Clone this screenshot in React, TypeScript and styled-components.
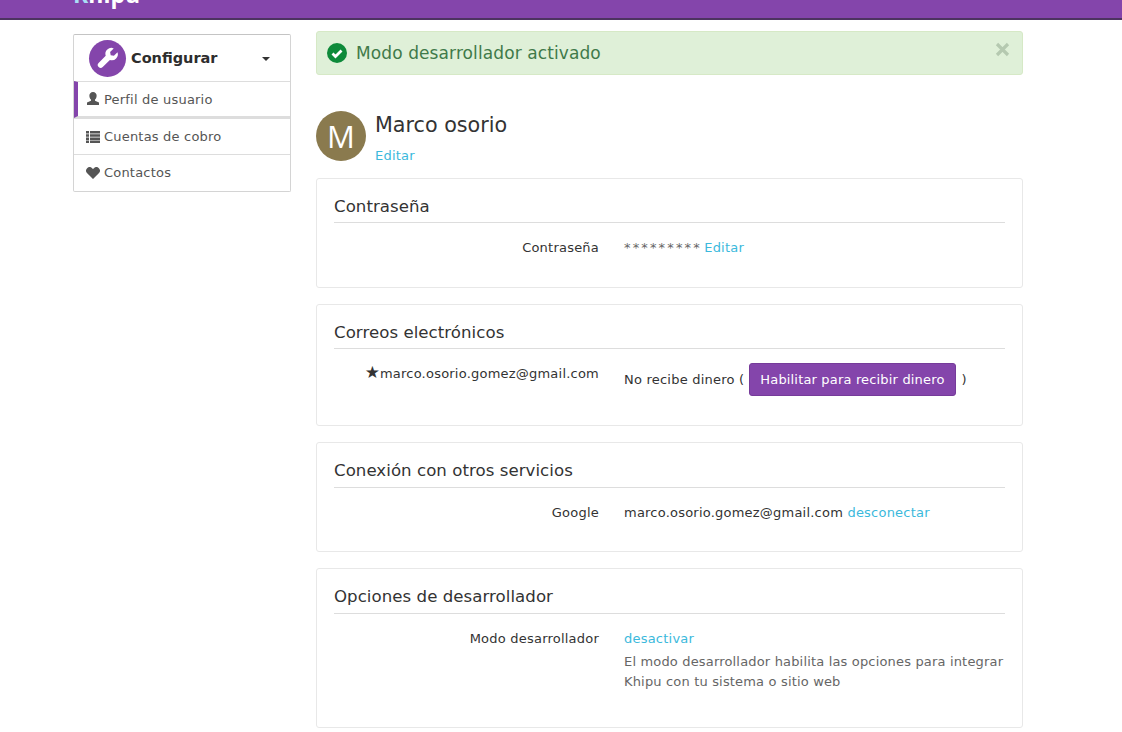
import styled, { createGlobalStyle } from "styled-components";

const GlobalStyle = createGlobalStyle`
  html, body {
    margin: 0;
    padding: 0;
    background: #fff;
    color: #333;
    font-family: "DejaVu Sans", Verdana, sans-serif;
    font-size: 13px;
    letter-spacing: 0.22px;
  }
  * { box-sizing: border-box; }
`;

const Page = styled.div`
  height: 732px;
  overflow: hidden;
`;

const TopBar = styled.div`
  height: 20px;
  background: #8445ab;
  border-bottom: 2px solid #4d3360;
  padding-left: 73px;
  overflow: hidden;
`;

const Logo = styled.div`
  margin-top: -19px;
  color: #fff;
  font: bold 23px "Open Sans", sans-serif;
  line-height: 26px;
  letter-spacing: 0;
`;

const LogoMark = styled.span`
  color: #a9def5;
`;

const Layout = styled.div`
  display: grid;
  grid-template-columns: 218px 707px;
  column-gap: 25px;
  padding: 11px 0 0 73px;
`;

const Menu = styled.div`
  margin-top: 3px;
  border: 1px solid #d4d4d4;
  border-top-color: #c4c4c4;
  border-radius: 2px;
  height: 158px;
`;

const MenuHead = styled.div`
  height: 46px;
  display: flex;
  align-items: center;
  padding: 0 15px;
  gap: 5px;
  font: bold 14.5px "DejaVu Sans", sans-serif;
  letter-spacing: 0;
  color: #2d2d2d;
`;

const WrenchCircle = styled.span`
  width: 37px;
  height: 37px;
  border-radius: 50%;
  background: #8445ab;
  display: flex;
  align-items: center;
  justify-content: center;
`;

const Caret = styled.span`
  margin: 2px 5px 0 auto;
  width: 0;
  height: 0;
  border-left: 4px solid transparent;
  border-right: 4px solid transparent;
  border-top: 4px solid #333;
`;

const MenuItem = styled.div<{ $active?: boolean }>`
  height: ${({ $active }) => ($active ? 37 : 36)}px;
  display: flex;
  align-items: center;
  gap: 4px;
  border-top: 1px solid #ddd;
  border-bottom: ${({ $active }) => ($active ? "2px solid #ddd" : "0")};
  border-left: ${({ $active }) => ($active ? "4px solid #8445ab" : "0")};
  padding-left: ${({ $active }) => ($active ? 8 : 12)}px;
  color: #555;
  letter-spacing: 0.2px;
`;

const Main = styled.div`
  display: flex;
  flex-direction: column;
`;

const Alert = styled.div`
  height: 44px;
  background: #dff0d8;
  border: 1px solid #d6e9c6;
  border-radius: 3px;
  display: flex;
  align-items: center;
  padding: 0 10px;
  gap: 9px;
  color: #3f7a4a;
  font-size: 17px;
  letter-spacing: 0.1px;
`;

const CloseIcon = styled.svg`
  margin: -8px 2px 0 auto;
`;

const Profile = styled.div`
  display: flex;
  gap: 9px;
  margin-top: 36px;
  height: 67px;
`;

const Avatar = styled.div`
  width: 50px;
  height: 50px;
  border-radius: 50%;
  background: #8a7a4e;
  color: #fff;
  font: 31px "Open Sans", sans-serif;
  display: flex;
  align-items: center;
  justify-content: center;
`;

const ProfileName = styled.div`
  font-size: 20.7px;
  line-height: 26px;
  margin-top: 1px;
  color: #333;
  letter-spacing: 0;
`;

const Link = styled.span`
  color: #3bb9dc;
`;

const ProfileEdit = styled(Link)`
  display: block;
  margin-top: 10px;
`;

const Panel = styled.section<{ $height: number }>`
  height: ${({ $height }) => $height}px;
  border: 1px solid #e8e8e8;
  border-radius: 3px;
  margin-bottom: 16px;
  padding: 17px 17px 0;
`;

const PanelTitle = styled.h2<{ $roomy?: boolean }>`
  margin: 0;
  height: ${({ $roomy }) => ($roomy ? 28 : 27)}px;
  font-size: 16.6px;
  font-weight: normal;
  line-height: 22px;
  color: #333;
  border-bottom: 1px solid #ddd;
  letter-spacing: 0.05px;
`;

const Row = styled.div`
  display: grid;
  grid-template-columns: 265px 1fr;
  column-gap: 25px;
  margin-top: 16px;
  line-height: 18px;
`;

const Label = styled.div`
  text-align: right;
`;

const Star = styled.span`
  font-size: 17px;
  line-height: 0;
  letter-spacing: 0;
`;

const Value = styled.div`
  color: #333;
`;

const Stars = styled.span`
  color: #666;
  letter-spacing: 2.15px;
  margin-right: -2px;
`;

const Help = styled.div`
  color: #666;
  margin-top: 4px;
  line-height: 20px;
  white-space: nowrap;
  letter-spacing: 0.17px;
`;

const PurpleButton = styled.span`
  display: inline-flex;
  align-items: center;
  height: 33px;
  padding: 0 10px;
  background: #8445ab;
  border: 1px solid #763b9a;
  border-radius: 3px;
  color: #fff;
  font-weight: 500;
  letter-spacing: 0.17px;
`;

const MoneyRow = styled.div`
  display: flex;
  align-items: center;
  gap: 5px;
  margin-top: -2px;
`;

const Paren = styled.span`
  margin-left: 1px;
`;

export default function App() {
  return (
    <Page>
      <GlobalStyle />
      <TopBar>
        <Logo>
          <LogoMark>K</LogoMark>hipu
        </Logo>
      </TopBar>
      <Layout>
        <Menu>
          <MenuHead>
            <WrenchCircle>
              <svg width="24" height="24" viewBox="0 0 24 24" fill="#fff">
                <path d="M21.5 6.2l-3.6 3.6-3.2-.6-.6-3.2 3.6-3.6a6 6 0 0 0-8 7.4L2.6 17a2.9 2.9 0 0 0 4.1 4.1l7.2-7.2a6 6 0 0 0 7.6-7.7z" />
              </svg>
            </WrenchCircle>
            Configurar
            <Caret />
          </MenuHead>
          <MenuItem $active>
            <svg width="14" height="14" viewBox="0 0 14 14" fill="#555">
              <path d="M7 0a3.6 3.6 0 0 1 3.6 4c0 1.500-.7 2.900-1.600 3.600v1.200l4 1.800V13H1v-2.400l4-1.800V7.600C4.100 6.900 3.400 5.500 3.400 4A3.600 3.600 0 0 1 7 0z" />
            </svg>
            Perfil de usuario
          </MenuItem>
          <MenuItem>
            <svg width="14" height="12" viewBox="0 0 14 12" fill="#555">
              <path d="M0 0h3v2.500H0zM4 0h10v2.500H4zM0 3.200h3v2.500H0zM4 3.200h10v2.500H4zM0 6.400h3v2.500H0zM4 6.400h10v2.500H4zM0 9.500h3V12H0zM4 9.500h10V12H4z" />
            </svg>
            Cuentas de cobro
          </MenuItem>
          <MenuItem>
            <svg width="14" height="12" viewBox="0 0 14 12" fill="#555">
              <path d="M7 12L1.200 6.200A3.500 3.500 0 0 1 6.100 1.200L7 2.100l.9-.9a3.500 3.500 0 0 1 4.900 5z" />
            </svg>
            Contactos
          </MenuItem>
        </Menu>
        <Main>
          <Alert>
            <svg width="20" height="20" viewBox="0 0 20 20">
              <circle cx="10" cy="10" r="10" fill="#0e8a3a" />
              <path d="M5.500 10.500l3 3L14.500 7.500" stroke="#fff" strokeWidth="2.800" fill="none" />
            </svg>
            Modo desarrollador activado
            <CloseIcon width="15" height="15" viewBox="0 0 15 15">
              <path d="M2 2l11 11M13 2L2 13" stroke="#b5c9b0" strokeWidth="3.200" />
            </CloseIcon>
          </Alert>
          <Profile>
            <Avatar>M</Avatar>
            <div>
              <ProfileName>Marco osorio</ProfileName>
              <ProfileEdit>Editar</ProfileEdit>
            </div>
          </Profile>
          <Panel $height={110}>
            <PanelTitle>Contraseña</PanelTitle>
            <Row>
              <Label>Contraseña</Label>
              <Value>
                <Stars>*********</Stars> <Link>Editar</Link>
              </Value>
            </Row>
          </Panel>
          <Panel $height={122}>
            <PanelTitle>Correos electrónicos</PanelTitle>
            <Row>
              <Label>
                <Star>★</Star>marco.osorio.gomez@gmail.com
              </Label>
              <MoneyRow>
                No recibe dinero (<PurpleButton>Habilitar para recibir dinero</PurpleButton>
                <Paren>)</Paren>
              </MoneyRow>
            </Row>
          </Panel>
          <Panel $height={110}>
            <PanelTitle $roomy>Conexión con otros servicios</PanelTitle>
            <Row>
              <Label>Google</Label>
              <Value>
                marco.osorio.gomez@gmail.com <Link>desconectar</Link>
              </Value>
            </Row>
          </Panel>
          <Panel $height={160}>
            <PanelTitle $roomy>Opciones de desarrollador</PanelTitle>
            <Row>
              <Label>Modo desarrollador</Label>
              <Value>
                <Link>desactivar</Link>
                <Help>
                  El modo desarrollador habilita las opciones para integrar
                  <br />
                  Khipu con tu sistema o sitio web
                </Help>
              </Value>
            </Row>
          </Panel>
        </Main>
      </Layout>
    </Page>
  );
}
